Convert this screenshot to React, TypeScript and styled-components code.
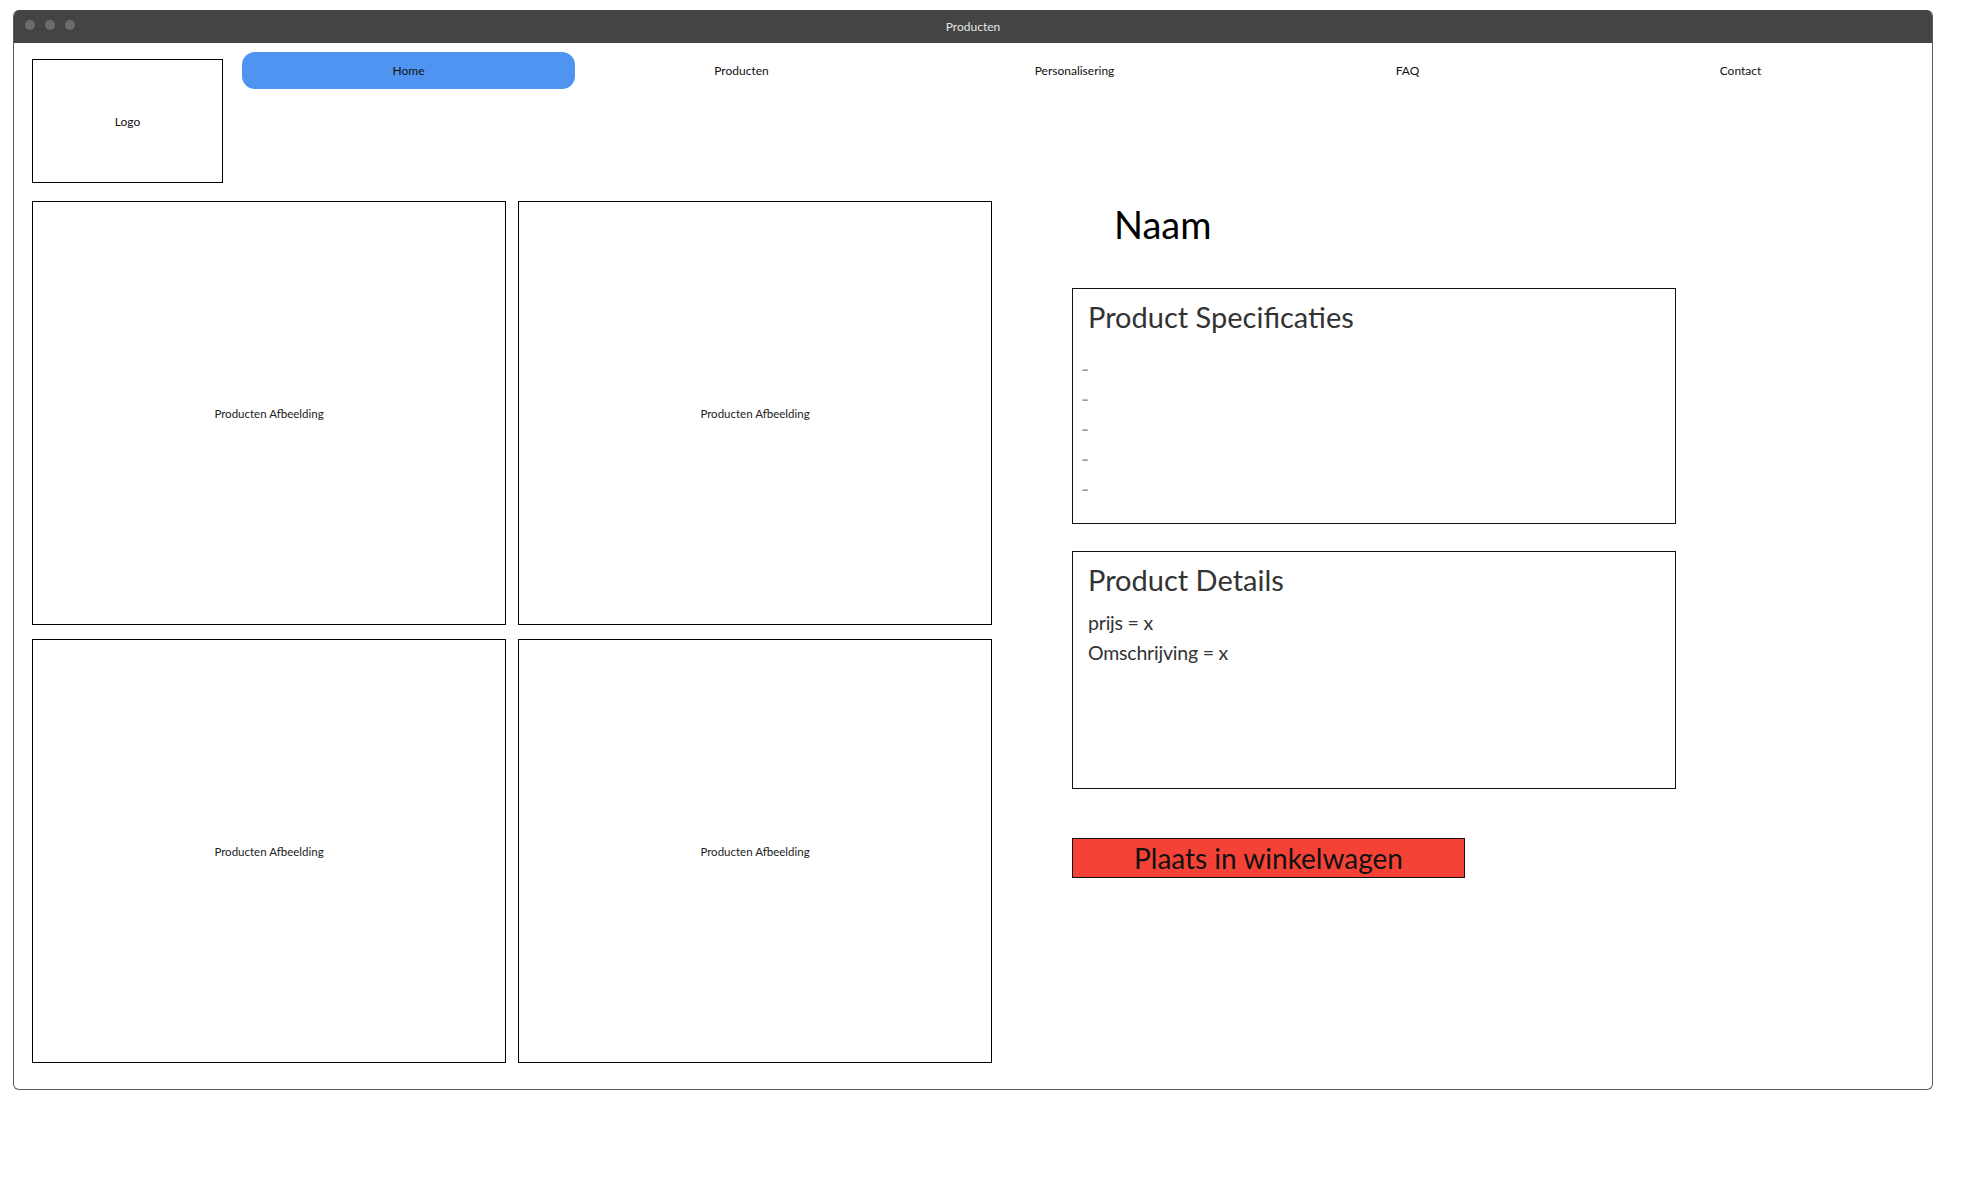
import React from 'react'
import styled, { createGlobalStyle } from 'styled-components'

const GlobalStyle = createGlobalStyle`
	html, body {
		margin: 0;
		padding: 0;
		background: #ffffff;
	}
	body {
		font-family: Lato, 'Liberation Sans', sans-serif;
		color: #222;
	}
`

const navItems = ['Home', 'Producten', 'Personalisering', 'FAQ', 'Contact']
const specLines = 5

const Window = styled.div`
	box-sizing: border-box;
	width: 1920px;
	height: 1080px;
	margin: 10px 0 0 13px;
	border: 1px solid #5c5c5c;
	border-top: none;
	border-radius: 6px;
	overflow: hidden;
	display: flex;
	flex-direction: column;
`

const TitleBar = styled.div`
	position: relative;
	height: 33px;
	flex: none;
	background: #444444;
	display: flex;
	align-items: center;
	justify-content: center;
	color: #e6e6e6;
	font-size: 12px;
`

const Dots = styled.div`
	position: absolute;
	left: 11px;
	top: 10px;
	display: flex;
	gap: 10px;
`

const Dot = styled.span`
	width: 10px;
	height: 10px;
	border-radius: 50%;
	background: #6d6d6d;
`

const Body = styled.div`
	padding: 9px 0 0 18px;
`

const Header = styled.div`
	display: flex;
	align-items: flex-start;
`

const LogoBox = styled.div`
	box-sizing: border-box;
	width: 191px;
	height: 124px;
	margin-top: 7px;
	border: 1px solid #000;
	display: flex;
	align-items: center;
	justify-content: center;
	font-size: 12px;
	color: #111;
`

const Nav = styled.nav`
	margin-left: 19px;
	display: grid;
	grid-template-columns: repeat(5, 333px);
`

const NavItem = styled.div<{ $active?: boolean }>`
	height: 37px;
	display: flex;
	align-items: center;
	justify-content: center;
	font-size: 12px;
	color: #111;
	border-radius: 13px;
	background: ${({ $active }) => ($active ? '#4f94f0' : 'transparent')};
`

const Main = styled.div`
	margin-top: 18px;
	display: flex;
	align-items: flex-start;
`

const Gallery = styled.div`
	display: grid;
	grid-template-columns: repeat(2, 474px);
	grid-auto-rows: 424px;
	column-gap: 12px;
	row-gap: 14px;
`

const ImageBox = styled.div`
	box-sizing: border-box;
	border: 1px solid #000;
	display: flex;
	align-items: center;
	justify-content: center;
	font-size: 11.5px;
	color: #222;
`

const Details = styled.div`
	margin-left: 80px;
	display: flex;
	flex-direction: column;
	align-items: flex-start;
`

const Name = styled.h1`
	margin: 0 0 0 42px;
	font-size: 38px;
	line-height: 46px;
	font-weight: 400;
	color: #000;
`

const Panel = styled.section<{ $gap: number; $height: number }>`
	box-sizing: border-box;
	width: 604px;
	height: ${({ $height }) => $height}px;
	margin-top: ${({ $gap }) => $gap}px;
	border: 1px solid #111;
	padding: 10px 15px 0 15px;
`

const PanelTitle = styled.h2`
	margin: 0;
	font-size: 29px;
	line-height: 35px;
	font-weight: 400;
	color: #333;
`

const DashList = styled.ul`
	list-style: none;
	margin: 20px 0 0 -7px;
	padding: 0;
	font-size: 22px;
	line-height: 30px;
	color: #9a9a9a;
`

const InfoList = styled.div`
	margin-top: 11px;
	font-size: 19.5px;
	line-height: 30px;
	letter-spacing: -0.2px;
	color: #333;
`

const CartButton = styled.button`
	box-sizing: border-box;
	width: 393px;
	height: 40px;
	margin-top: 49px;
	border: 1px solid #111;
	background: #f44336;
	font-family: inherit;
	font-size: 28px;
	line-height: 1;
	color: #111;
	padding: 0;
	cursor: pointer;
`

export default function App() {
	return (
		<>
			<GlobalStyle />
			<Window>
				<TitleBar>
					<Dots>
						<Dot />
						<Dot />
						<Dot />
					</Dots>
					Producten
				</TitleBar>
				<Body>
					<Header>
						<LogoBox>Logo</LogoBox>
						<Nav>
							{navItems.map((item, i) => (
								<NavItem key={item} $active={i === 0}>
									{item}
								</NavItem>
							))}
						</Nav>
					</Header>
					<Main>
						<Gallery>
							{[0, 1, 2, 3].map((i) => (
								<ImageBox key={i}>Producten Afbeelding</ImageBox>
							))}
						</Gallery>
						<Details>
							<Name>Naam</Name>
							<Panel $gap={41} $height={236}>
								<PanelTitle>Product Specificaties</PanelTitle>
								<DashList>
									{Array.from({ length: specLines }, (_, i) => (
										<li key={i}>-</li>
									))}
								</DashList>
							</Panel>
							<Panel $gap={27} $height={238}>
								<PanelTitle>Product Details</PanelTitle>
								<InfoList>
									<div>prijs = x</div>
									<div>Omschrijving = x</div>
								</InfoList>
							</Panel>
							<CartButton>Plaats in winkelwagen</CartButton>
						</Details>
					</Main>
				</Body>
			</Window>
		</>
	)
}
